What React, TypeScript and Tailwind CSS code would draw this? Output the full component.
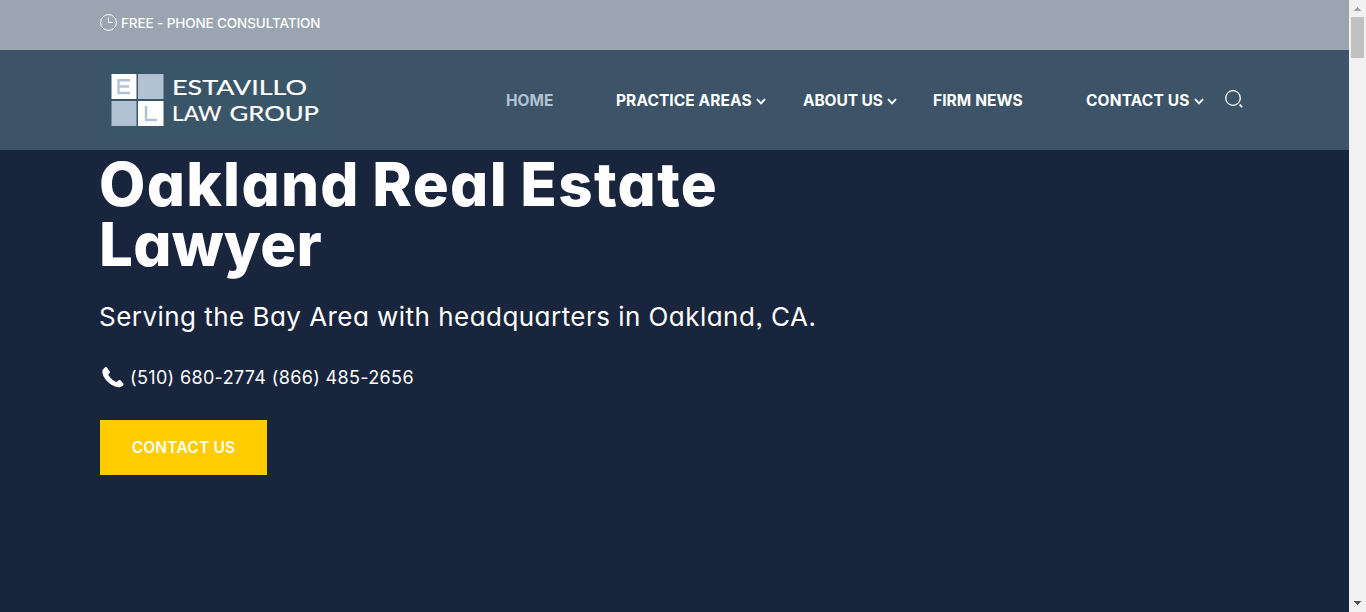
import React from "react";

const geo = "font-['Inter',sans-serif] [font-feature-settings:'cv11','ss03']";

function Caret() {
  return (
    <svg width="10" height="7" viewBox="0 0 10 7" fill="none" className="mt-px shrink-0">
      <path d="M1 1.2 5 5.4 9 1.2" stroke="#fff" strokeWidth="1.9" />
    </svg>
  );
}

function Logo() {
  return (
    <svg width="227" height="80" viewBox="100 60 227 80" className="shrink-0">
      <rect x="100" y="60" width="227" height="80" fill="#3a5567" />
      <rect x="111.500" y="74" width="25" height="25" fill="#fff" />
      <rect x="138" y="74" width="25.5" height="25" fill="#b1c3d3" />
      <rect x="111.500" y="101" width="25" height="25" fill="#b1c3d3" />
      <rect x="138" y="101" width="25.5" height="25" fill="#fff" />
      <path d="M130 80.200H118.500V93H130M118.500 86.500H129" fill="none" stroke="#b1c3d3" strokeWidth="2.4" />
      <path d="M146 106V120H157" fill="none" stroke="#b1c3d3" strokeWidth="2.4" />
      <g fill="#fff" stroke="#fff" strokeWidth=".2" fontFamily="Lato, sans-serif" fontSize="21.500">
        <text x="172" y="94.800" textLength="135" lengthAdjust="spacingAndGlyphs">ESTAVILLO</text>
        <text x="172" y="120.800" textLength="49.500" lengthAdjust="spacingAndGlyphs">LAW</text>
        <text x="229.500" y="120.800" textLength="89.500" lengthAdjust="spacingAndGlyphs">GROUP</text>
      </g>
    </svg>
  );
}

function NavItem({ label, box, tone = "text-white", caret = false }: { label: string; box: string; tone?: string; caret?: boolean }) {
  return (
    <a className={`flex shrink-0 items-center whitespace-nowrap text-[15.500px] font-bold ${box} ${tone}`}>
      <span>{label}</span>
      {caret && <Caret />}
    </a>
  );
}

export default function App() {
  return (
    <div className={`flex h-[612px] w-[1366px] overflow-hidden bg-[#19253c] text-white ${geo}`}>
      <div className="flex min-w-0 flex-1 flex-col">
        <div className="flex h-[50px] items-start bg-[#9aa5b1] pt-[13px] pl-[100px]">
          <svg width="17" height="18" viewBox="0 0 17 18" fill="none" stroke="#fff" className="shrink-0">
            <circle cx="8.500" cy="9.500" r="7.900" />
            <path d="M8.500 4.500V9.500H13" />
          </svg>
          <span className="ml-[4px] text-[13.500px] leading-[20px] font-[450] tracking-[-0.11px] whitespace-nowrap">FREE - PHONE CONSULTATION</span>
        </div>
        <header className="flex h-[100px] items-center bg-[#3d5468] pl-[100px]">
          <Logo />
          <nav className="ml-[179px] flex h-6 items-center pt-[2px]">
            <NavItem label="HOME" box="w-[110px]" tone="text-[#b1c3d3]" />
            <NavItem label="PRACTICE AREAS" box="w-[187px] gap-1 tracking-[0.08px]" caret />
            <NavItem label="ABOUT US" box="w-[130px] gap-1 tracking-[-0.12px]" caret />
            <NavItem label="FIRM NEWS" box="w-[153px] tracking-[0.08px]" />
            <NavItem label="CONTACT US" box="w-[139px] gap-1 tracking-[0.15px]" caret />
            <svg width="19" height="19" viewBox="0 0 19 19" fill="none" stroke="#fff" className="mb-[3px] shrink-0">
              <circle cx="8" cy="8" r="7.300" strokeWidth="1.300" />
              <path d="m14.600 14.600 2.600 2.600" strokeWidth="1.800" />
            </svg>
          </nav>
        </header>
        <main className="flex flex-1 flex-col items-start pt-[4px] pl-[100px]">
          <h1 className="text-[60px] leading-[60px] font-extrabold whitespace-nowrap">
            <span className="-ml-px block tracking-[1.3px] [word-spacing:-2px]">Oakland Real Estate</span>
            <span className="-ml-px block tracking-[0.3px]">Lawyer</span>
          </h1>
          <p className="mt-[23px] -ml-px text-[26px] leading-[40px] tracking-[0.46px] whitespace-nowrap">Serving the Bay Area with headquarters in Oakland, CA.</p>
          <div className="mt-[25px] flex h-[30px] items-center">
            <svg width="22" height="22" viewBox="0 0 22 22" className="mb-px ml-[2px] shrink-0" fill="#fff">
              <path d="M.7 3.700 3 1.200Q4 .4 4.900 1.400L7.800 5.400Q8.300 6.300 7.500 7.100L6.300 8.600C7.600 11.600 11.300 15 14.500 16.100L16.300 14.500Q17.600 13.300 19 14.700L21.300 17.400Q21.900 18.500 21 19.400C18.500 22 14.500 21.900 9.500 18.800C4.500 15.500.8 10.700.4 6.500Q.2 4.500.7 3.700Z" />
            </svg>
            <span className="ml-[6px] text-[18px] tracking-[0.35px] whitespace-nowrap">(510) 680-2774 (866) 485-2656</span>
          </div>
          <button className="mt-[28px] flex h-[55px] w-[167px] items-center justify-center bg-[#ffcc00] text-[15.500px] font-semibold tracking-[0.2px]">CONTACT US</button>
        </main>
      </div>
      <aside className="flex w-[17px] shrink-0 flex-col items-center bg-[#f1f1f1]">
        <svg width="17" height="17" viewBox="0 0 17 17" shapeRendering="crispEdges">
          <path d="M5 11H12L8.500 7Z" fill="#a3a3a3" />
        </svg>
        <div className="h-[41px] w-[13px] bg-[#c1c1c1]" />
        <svg width="17" height="17" viewBox="0 0 17 17" className="mt-auto" shapeRendering="crispEdges">
          <path d="M5 6H12L8.500 10Z" fill="#505050" />
        </svg>
      </aside>
    </div>
  );
}
